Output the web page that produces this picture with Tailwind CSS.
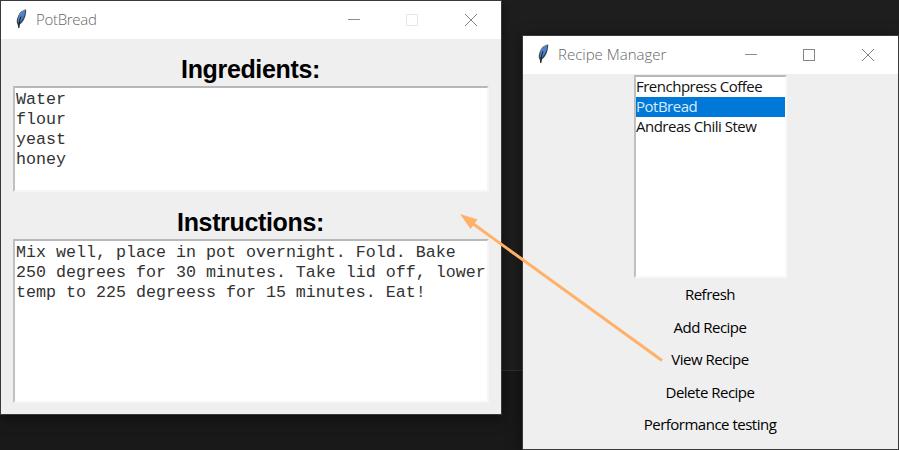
<!DOCTYPE html>
<html lang="en">
<head>
<meta charset="utf-8">
<title>Recipe Manager</title>
<script src="https://cdn.jsdelivr.net/npm/@tailwindcss/browser@4"></script>
</head>
<body class="relative w-[899px] h-[450px] overflow-hidden bg-[#1e1e1e] font-['Open_Sans','Noto_Sans',sans-serif] text-black">
<svg class="hidden">
  <symbol id="feather" viewBox="0 0 12 20">
    <path d="M11 .6C7.2 1 4.2 4 2.8 7.8 1.8 10.5 1.3 13 2.2 14.5L3.9 19.5 4.8 15.5C7.8 13.5 9.8 10 10.5 6.5 11 4.2 11.5 2 11 .6Z" fill="#3a4552"/>
    <path d="M9.9 1.3C6.7 2.5 4.2 6 3.2 9.3L2.8 12.9 4.5 13.5C7.8 11 9.8 7 10.3 1.6Z" fill="#4b84d0"/>
    <path d="M9.8 1.2C7.3 2 4.8 4.3 3.5 7.5" fill="none" stroke="#8f9cab" stroke-width=".8"/>
    <path d="M6 7.5C4.6 11 4 14 3.8 19" fill="none" stroke="#111820" stroke-width="1"/>
  </symbol>
</svg>

<div class="absolute inset-x-0 bottom-0 h-20 border-t border-[#303030] bg-[#191919]"></div>

<!-- PotBread window -->
<section class="absolute left-0 top-0 flex h-[415px] w-[502px] flex-col border border-[#3a393a] bg-[#efefef] shadow-[0_3px_12px_rgba(0,0,0,0.5)]">
  <header class="flex h-[38px] shrink-0 items-center bg-white pl-[14px]">
    <svg class="mb-[3px] h-5 w-3"><use href="#feather"/></svg>
    <span class="ml-[9px] mb-[2px] whitespace-nowrap text-[15px] font-light leading-5 tracking-[-0.3px] text-[#666]">PotBread</span>
    <svg class="ml-auto mr-[22px] h-[14px] w-[132px]" viewBox="0 0 132 14" fill="none" shape-rendering="crispEdges">
      <path d="M1 6.5H13" stroke="#8d8d8d"/>
      <rect x="59.5" y="1.5" width="11" height="11" stroke="#e7e7e7"/>
      <path d="M118 1L130 13M130 1L118 13" stroke="#858585" shape-rendering="auto"/>
    </svg>
  </header>
  <main class="flex flex-col px-3 pt-[15px] font-['Liberation_Sans',Arial,sans-serif]">
    <h2 class="h-8 pr-px text-center text-[25px] font-bold leading-[31px] tracking-[-0.35px]">Ingredients:</h2>
    <div class="h-[106px] w-[476px] border-2 border-b-[#f5f5f5] border-l-[#c0c0c0] border-r-[#f5f5f5] border-t-[#b8b8b8] bg-white pl-px pt-[2px] font-['Liberation_Mono','Courier_New',monospace] text-[16.67px] leading-5 text-[#333]">Water<br>flour<br>yeast<br>honey</div>
    <h2 class="h-[47px] pr-px pt-[15px] text-center text-[25px] font-bold leading-[31px] tracking-[-0.35px]">Instructions:</h2>
    <div class="h-[164px] w-[476px] whitespace-nowrap border-2 border-b-[#f5f5f5] border-l-[#c0c0c0] border-r-[#f5f5f5] border-t-[#b8b8b8] bg-white pl-px pt-[2px] font-['Liberation_Mono','Courier_New',monospace] text-[16.67px] leading-5 text-[#333]">Mix well, place in pot overnight. Fold. Bake<br>250 degrees for 30 minutes. Take lid off, lower<br>temp to 225 degreess for 15 minutes. Eat!</div>
  </main>
</section>

<!-- Recipe Manager window -->
<section class="absolute left-[522px] top-[35px] flex h-[415px] w-[377px] flex-col border border-[#3a393a] bg-[#efefef] shadow-[0_3px_12px_rgba(0,0,0,0.5)]">
  <header class="flex h-[38px] shrink-0 items-center bg-white pl-[14px]">
    <svg class="mb-[3px] h-5 w-3"><use href="#feather"/></svg>
    <span class="ml-[9px] mb-[2px] whitespace-nowrap text-[15px] font-light leading-5 tracking-[0px] text-[#666]">Recipe Manager</span>
    <svg class="ml-auto mr-[22px] h-[14px] w-[132px]" viewBox="0 0 132 14" fill="none" shape-rendering="crispEdges">
      <path d="M1 6.5H13" stroke="#8d8d8d"/>
      <rect x="59.5" y="1.5" width="11" height="11" stroke="#858585"/>
      <path d="M118 1L130 13M130 1L118 13" stroke="#858585" shape-rendering="auto"/>
    </svg>
  </header>
  <main class="flex flex-col items-center text-[15px] leading-5 tracking-[-0.5px]">
    <ul class="mt-px h-[203px] w-[153px] whitespace-nowrap border-2 border-b-[#f8f8f8] border-l-[#c0c0c0] border-r-[#f8f8f8] border-t-[#b8b8b8] bg-white text-[#111]">
      <li class="h-5 leading-[18px]">Frenchpress Coffee</li>
      <li class="h-5 bg-[#0078d7] leading-[18px] text-[#d8eaff]">PotBread</li>
      <li class="h-5 leading-[18px]">Andreas Chili Stew</li>
    </ul>
    <nav class="flex flex-col items-center whitespace-nowrap pr-px leading-[32.5px] text-black">
      <button>Refresh</button>
      <button>Add Recipe</button>
      <button>View Recipe</button>
      <button>Delete Recipe</button>
      <button>Performance testing</button>
    </nav>
  </main>
</section>

<svg class="absolute left-[455px] top-[208px] h-[160px] w-[214px]" viewBox="455 208 214 160">
  <path d="M662 360.5L472 223" stroke="#ffb168" stroke-width="3"/>
  <path d="M460 214L477.5 219.5 470.5 229Z" fill="#ffb168"/>
</svg>
</body>
</html>
